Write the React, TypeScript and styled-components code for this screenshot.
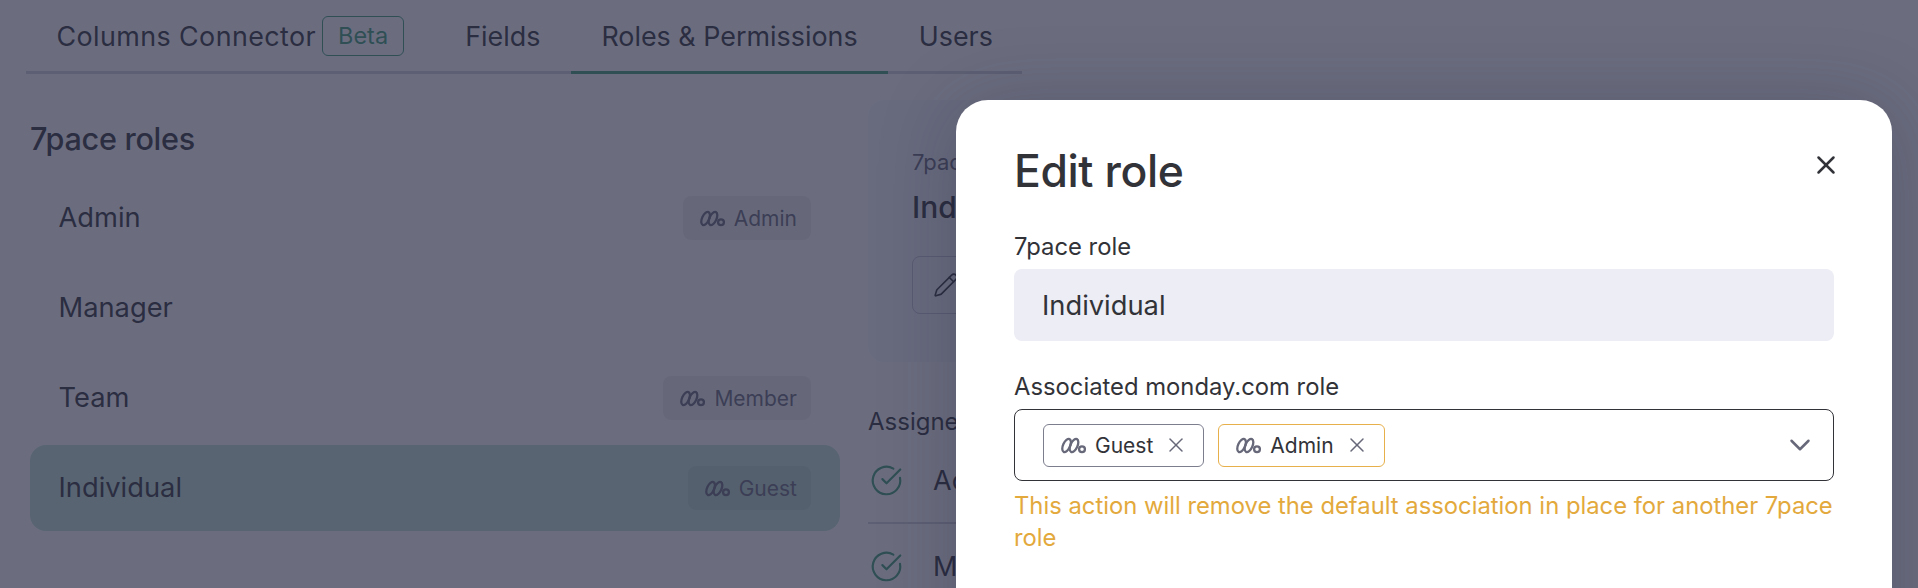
import React from 'react';
import styled, { createGlobalStyle } from 'styled-components';
import { X, ChevronDown, CircleCheckBig, Pencil } from 'lucide-react';

const GlobalStyle = createGlobalStyle`
  html, body {
    margin: 0;
    padding: 0;
    background: #fff;
    font-family: Inter, "Noto Sans", sans-serif;
    color: #323338;
  }
`;

const Page = styled.div`
  position: relative;
  width: 1918px;
  height: 588px;
  overflow: hidden;
`;

// Onglets
const Tabs = styled.nav`
  display: flex;
  width: 996px;
  height: 74px;
  margin-left: 26px;
  box-sizing: border-box;
  border-bottom: 3px solid #d2d2da;
`;

const Tab = styled.div<{ $active?: boolean }>`
  display: flex;
  flex: none;
  align-items: center;
  gap: 6px;
  height: 74px;
  box-sizing: border-box;
  padding: 0 30.5px;
  font-size: 26.9px;
  white-space: nowrap;
  border-bottom: 3px solid ${(p) => (p.$active ? '#3d9e77' : 'transparent')};
`;

const ConnectorTab = styled(Tab)`
  letter-spacing: 0.4px;
`;

const BetaBadge = styled.span`
  display: flex;
  align-items: center;
  height: 40px;
  padding: 0 15px;
  box-sizing: border-box;
  border: 1px solid #3d9e77;
  border-radius: 6px;
  font-size: 23.5px;
  letter-spacing: 0;
  color: #3d9e77;
`;

const Content = styled.div`
  display: grid;
  grid-template-columns: 810px 1fr;
  gap: 28px;
  margin-left: 30px;
`;

// Colonne de gauche
const RolesColumn = styled.section`
  display: flex;
  flex-direction: column;
`;

const RolesTitle = styled.h2`
  margin: 47px 0 18px;
  height: 36px;
  line-height: 36px;
  font-size: 30.6px;
  font-weight: 500;
  letter-spacing: -0.3px;
`;

const RolesList = styled.div`
  display: flex;
  flex-direction: column;
  gap: 4px;
`;

const RoleRow = styled.div<{ $selected?: boolean }>`
  display: flex;
  align-items: center;
  justify-content: space-between;
  height: 86px;
  box-sizing: border-box;
  padding: 0 29px 0 28.5px;
  border-radius: 16px;
  font-size: 27.3px;
  background: ${(p) => (p.$selected ? '#c2e3d6' : 'transparent')};
`;

const RoleName = styled.span`
  padding-bottom: 2px;
`;

const RoleBadge = styled.span`
  display: flex;
  align-items: center;
  gap: 9px;
  height: 44px;
  padding: 0 14px 0 17px;
  box-sizing: border-box;
  border-radius: 8px;
  background: rgba(50, 51, 56, 0.08);
  font-size: 21px;
  color: #676879;
`;

// Colonne de droite, en grande partie sous la modale
const DetailColumn = styled.section`
  display: flex;
  flex-direction: column;
  padding-top: 26px;
`;

const DetailCard = styled.div`
  width: 400px;
  height: 262px;
  box-sizing: border-box;
  padding: 48px 44px 0;
  border-radius: 16px;
  background: #f6f7fb;
`;

const DetailCaption = styled.div`
  font-size: 22px;
  line-height: 28px;
  color: #676879;
`;

const DetailName = styled.div`
  margin-top: 11px;
  font-size: 30px;
  line-height: 40px;
  font-weight: 500;
`;

const EditButton = styled.div`
  display: flex;
  align-items: center;
  gap: 10px;
  width: 120px;
  height: 58px;
  margin-top: 29px;
  padding-left: 20px;
  box-sizing: border-box;
  border: 1px solid #c3c6d4;
  border-radius: 8px;
  font-size: 22px;
`;

const AssignedTitle = styled.div`
  margin-top: 44px;
  font-size: 24px;
  line-height: 32px;
`;

const PermissionRow = styled.div`
  display: flex;
  align-items: center;
  gap: 30px;
  width: 400px;
  height: 86px;
  padding-left: 2px;
  box-sizing: border-box;
  border-bottom: 2px solid #d2d2da;
  font-size: 27px;
  color: #323338;

  svg {
    color: #3d9e77;
    flex: none;
  }
`;

// Modale
const Overlay = styled.div`
  position: absolute;
  inset: 0;
  background: rgba(41, 44, 70, 0.69);
`;

const Modal = styled.div`
  position: absolute;
  left: 956px;
  top: 100px;
  width: 936px;
  height: 600px;
  box-sizing: border-box;
  padding: 40px 58px 0;
  border-radius: 32px;
  background: #fff;
  box-shadow: 0 6px 80px rgba(20, 20, 40, 0.22);
`;

const ModalHeader = styled.div`
  display: flex;
  align-items: center;
  justify-content: space-between;
  height: 64px;
`;

const ModalTitle = styled.h1`
  margin: 0 0 3px;
  font-size: 44.5px;
  font-weight: 500;
  letter-spacing: -0.4px;
  color: #323338;
`;

const CloseButton = styled.button`
  display: flex;
  margin: 0 -7px 15px 0;
  padding: 0;
  border: none;
  background: none;
  color: #323338;
`;

const Label = styled.div`
  margin-top: 28px;
  height: 30px;
  line-height: 30px;
  font-size: 23.8px;
  color: #323338;
`;

const SecondLabel = styled(Label)`
  margin-top: 31px;
`;

const ReadOnlyField = styled.div`
  display: flex;
  align-items: center;
  height: 72px;
  margin-top: 7px;
  padding-left: 28px;
  box-sizing: border-box;
  border-radius: 8px;
  background: #ecedf5;
  font-size: 27.3px;
  color: #323338;
`;

const SelectField = styled.div`
  display: flex;
  align-items: center;
  gap: 14px;
  height: 72px;
  margin-top: 7px;
  padding: 0 16.5px 0 28px;
  box-sizing: border-box;
  border: 1.5px solid #323338;
  border-radius: 8px;
`;

const Chip = styled.span<{ $warning?: boolean }>`
  display: flex;
  align-items: center;
  gap: 9px;
  height: 43px;
  padding: 0 15px 0 17px;
  box-sizing: border-box;
  border: 1.5px solid ${(p) => (p.$warning ? '#e7b04a' : '#7c7e8e')};
  border-radius: 6px;
  font-size: 21px;
  color: #323338;

  > svg:last-child {
    margin-left: 2px;
    color: #676879;
  }
`;

const Chevron = styled(ChevronDown)`
  margin-left: auto;
  color: #676879;
`;

const Warning = styled.p`
  margin: 9px 0 0;
  font-size: 23.8px;
  line-height: 32px;
  color: #e3a93c;
`;

function MondayIcon() {
  return (
    <svg width={25} height={17} viewBox="0 0 25 17" fill="none" stroke="#676879" strokeWidth="2.3">
      <ellipse cx="5.6" cy="8.5" rx="3.5" ry="7" transform="rotate(25 5.6 8.5)" />
      <ellipse cx="13" cy="8.5" rx="3.5" ry="7" transform="rotate(25 13 8.5)" />
      <circle cx="21" cy="12.2" r="2.9" />
    </svg>
  );
}

const roles = [
  { name: 'Admin', badge: 'Admin' },
  { name: 'Manager' },
  { name: 'Team', badge: 'Member' },
  { name: 'Individual', badge: 'Guest', selected: true },
];

export default function App() {
  return (
    <Page>
      <GlobalStyle />
      <Tabs>
        <ConnectorTab>
          Columns Connector <BetaBadge>Beta</BetaBadge>
        </ConnectorTab>
        <Tab>Fields</Tab>
        <Tab $active>Roles &amp; Permissions</Tab>
        <Tab>Users</Tab>
      </Tabs>
      <Content>
        <RolesColumn>
          <RolesTitle>7pace roles</RolesTitle>
          <RolesList>
            {roles.map((role) => (
              <RoleRow key={role.name} $selected={role.selected}>
                <RoleName>{role.name}</RoleName>
                {role.badge && (
                  <RoleBadge>
                    <MondayIcon />
                    {role.badge}
                  </RoleBadge>
                )}
              </RoleRow>
            ))}
          </RolesList>
        </RolesColumn>
        <DetailColumn>
          <DetailCard>
            <DetailCaption>7pace role</DetailCaption>
            <DetailName>Individual</DetailName>
            <EditButton>
              <Pencil size={26} strokeWidth={1.5} />
              Edit
            </EditButton>
          </DetailCard>
          <AssignedTitle>Assigned permissions</AssignedTitle>
          <PermissionRow>
            <CircleCheckBig size={33} strokeWidth={1.6} />
            Access
          </PermissionRow>
          <PermissionRow>
            <CircleCheckBig size={33} strokeWidth={1.6} />
            Manage
          </PermissionRow>
        </DetailColumn>
      </Content>
      <Overlay />
      <Modal>
        <ModalHeader>
          <ModalTitle>Edit role</ModalTitle>
          <CloseButton>
            <X size={30} strokeWidth={2} />
          </CloseButton>
        </ModalHeader>
        <Label>7pace role</Label>
        <ReadOnlyField>Individual</ReadOnlyField>
        <SecondLabel>Associated monday.com role</SecondLabel>
        <SelectField>
          <Chip>
            <MondayIcon />
            Guest
            <X size={24} strokeWidth={1.5} />
          </Chip>
          <Chip $warning>
            <MondayIcon />
            Admin
            <X size={24} strokeWidth={1.5} />
          </Chip>
          <Chevron size={34} strokeWidth={1.75} />
        </SelectField>
        <Warning>This action will remove the default association in place for another 7pace role</Warning>
      </Modal>
    </Page>
  );
}
